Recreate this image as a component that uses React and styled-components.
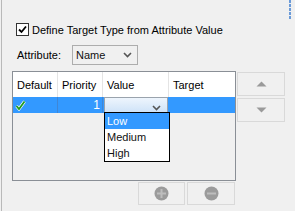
import React from "react";
import styled, { createGlobalStyle } from "styled-components";

const GlobalStyle = createGlobalStyle`
  html, body {
    margin: 0;
    padding: 0;
    background: #f0f0f0;
  }
  body {
    font-family: "Liberation Sans", Arial, sans-serif;
    font-size: 11px;
    color: #000;
  }
`;

const Page = styled.div`
  width: 294px;
  height: 211px;
  margin-left: 1px;
  border-left: 1px solid #b9b9b9;
  box-sizing: border-box;
  background: #f0f0f0;
  display: flex;
  flex-direction: column;
  overflow: hidden;
`;

const TopStrip = styled.div`
  height: 20px;
  display: flex;
  justify-content: flex-end;
  padding-right: 4px;
`;

const Grip = styled.div`
  width: 2px;
  height: 20px;
  background: repeating-linear-gradient(#6a9ad8 0 3px, transparent 3px 4px);
`;

const CheckRow = styled.label`
  display: flex;
  align-items: center;
  gap: 3px;
  height: 13px;
  margin-top: 3px;
  padding-left: 14px;
`;

const CheckBox = styled.span`
  width: 13px;
  height: 13px;
  box-sizing: border-box;
  border: 1px solid #333;
  background: #fff;
  display: flex;
  align-items: center;
  justify-content: center;
`;

const AttrRow = styled.div`
  display: flex;
  align-items: center;
  height: 20px;
  margin-top: 9px;
  padding-left: 15px;
`;

const Label = styled.span`
  width: 55px;
`;

const Select = styled.div`
  width: 66px;
  height: 20px;
  box-sizing: border-box;
  border: 1px solid #adadad;
  background: #f0f0f0;
  display: flex;
  align-items: center;
  justify-content: space-between;
  padding: 0 5px 0 3px;
  color: #111;
`;

const TableArea = styled.div`
  display: flex;
  gap: 1px;
  margin-top: 6px;
  padding-left: 10px;
`;

const Table = styled.div`
  width: 224px;
  height: 110px;
  box-sizing: border-box;
  border: 1px solid #8a8f96;
  display: flex;
  flex-direction: column;
`;

const Cols = styled.div`
  display: grid;
  grid-template-columns: 45px 45px 66px 66px;
  height: ${(p) => p.$h}px;
  background: ${(p) => p.$bg};
`;

const HeadCell = styled.div`
  display: flex;
  align-items: center;
  padding-left: 4px;
  border-right: 1px solid #e4e4e4;
  &:last-child { border-right: none; }
`;

const BodyCell = styled.div`
  position: relative;
  display: flex;
  align-items: center;
  justify-content: ${(p) => (p.$right ? "flex-end" : "flex-start")};
  padding: ${(p) => (p.$right ? "0 2px 0 0" : "0 0 0 2px")};
  border-right: 1px solid ${(p) => (p.$sep ? "#3f86d6" : "transparent")};
  color: #fff;
  font-size: 12px;
`;

const Editor = styled.div`
  position: relative;
  width: 66px;
  height: 16px;
  box-sizing: border-box;
  margin-left: -1px;
  border: 1px solid #9aa3ad;
  background: linear-gradient(#eef5fd, #cfe3f8);
  display: flex;
  align-items: flex-end;
  justify-content: flex-end;
  padding: 0 6px 1px 0;
`;

const Popup = styled.div`
  position: absolute;
  top: 14px;
  left: -1px;
  width: 66px;
  box-sizing: border-box;
  border: 1px solid #000;
  background: #fff;
  z-index: 2;
`;

const Item = styled.div`
  height: 16px;
  line-height: 16px;
  padding-left: 2px;
  font-size: 11px;
  color: ${(p) => (p.$active ? "#fff" : "#111")};
  background: ${(p) => (p.$active ? "#3399ff" : "transparent")};
`;

const SideButtons = styled.div`
  display: flex;
  flex-direction: column;
  gap: 2px;
  margin-top: 1px;
`;

const ToolButton = styled.div`
  width: ${(p) => p.$w}px;
  height: ${(p) => p.$h}px;
  box-sizing: border-box;
  border: 1px solid #d9d9d9;
  background: #f0f0f0;
  display: flex;
  align-items: center;
  justify-content: center;
`;

const BottomButtons = styled.div`
  display: flex;
  gap: 2px;
  margin-top: 1px;
  padding-left: 136px;
`;

const Chevron = () => (
  <svg width="9" height="6" viewBox="0 0 9 6">
    <path d="M1 1 L4.5 4.5 L8 1" fill="none" stroke="#555" strokeWidth="1.6" />
  </svg>
);

const Tick = () => (
  <svg width="11" height="11" viewBox="0 0 11 11">
    <path d="M1.5 6 L4 9 L9.5 1.5" fill="none" stroke="#fff" strokeWidth="3" />
    <path d="M1.5 6 L4 9 L9.5 1.5" fill="none" stroke="#1f9a1f" strokeWidth="1.8" />
  </svg>
);

const Triangle = ({ up }) => (
  <svg width="11" height="6" viewBox="0 0 11 6">
    <path d={up ? "M0.5 5.5 L5.5 0.5 L10.5 5.5 Z" : "M0.5 0.5 L10.5 0.5 L5.5 5.5 Z"} fill="#9a9a9a" />
  </svg>
);

const RoundSign = ({ plus }) => (
  <svg width="15" height="15" viewBox="0 0 15 15">
    <circle cx="7.5" cy="7.5" r="7" fill="#9b9b9b" />
    <rect x="3" y="6.5" width="9" height="2" fill="#bdbdbd" />
    {plus && <rect x="6.5" y="3" width="2" height="9" fill="#bdbdbd" />}
  </svg>
);

export default function App() {
  return (
    <>
      <GlobalStyle />
      <Page>
        <TopStrip>
          <Grip />
        </TopStrip>
        <CheckRow>
          <CheckBox>
            <svg width="9" height="9" viewBox="0 0 9 9">
              <path d="M1 4.5 L3.5 7 L8 1.5" fill="none" stroke="#000" strokeWidth="1.8" />
            </svg>
          </CheckBox>
          <span>Define Target Type from Attribute Value</span>
        </CheckRow>
        <AttrRow>
          <Label>Attribute:</Label>
          <Select>
            <span>Name</span>
            <Chevron />
          </Select>
        </AttrRow>
        <TableArea>
          <Table>
            <Cols $h={25} $bg="#fff">
              <HeadCell>Default</HeadCell>
              <HeadCell>Priority</HeadCell>
              <HeadCell>Value</HeadCell>
              <HeadCell>Target</HeadCell>
            </Cols>
            <Cols $h={16} $bg="#3399ff">
              <BodyCell $sep>
                <Tick />
              </BodyCell>
              <BodyCell $sep $right>1</BodyCell>
              <BodyCell>
                <Editor>
                  <Chevron />
                  <Popup>
                    <Item $active>Low</Item>
                    <Item>Medium</Item>
                    <Item>High</Item>
                  </Popup>
                </Editor>
              </BodyCell>
              <BodyCell />
            </Cols>
          </Table>
          <SideButtons>
            <ToolButton $w={48} $h={24}>
              <Triangle up />
            </ToolButton>
            <ToolButton $w={48} $h={24}>
              <Triangle />
            </ToolButton>
          </SideButtons>
        </TableArea>
        <BottomButtons>
          <ToolButton $w={47} $h={23}>
            <RoundSign plus />
          </ToolButton>
          <ToolButton $w={48} $h={23}>
            <RoundSign />
          </ToolButton>
        </BottomButtons>
      </Page>
    </>
  );
}
